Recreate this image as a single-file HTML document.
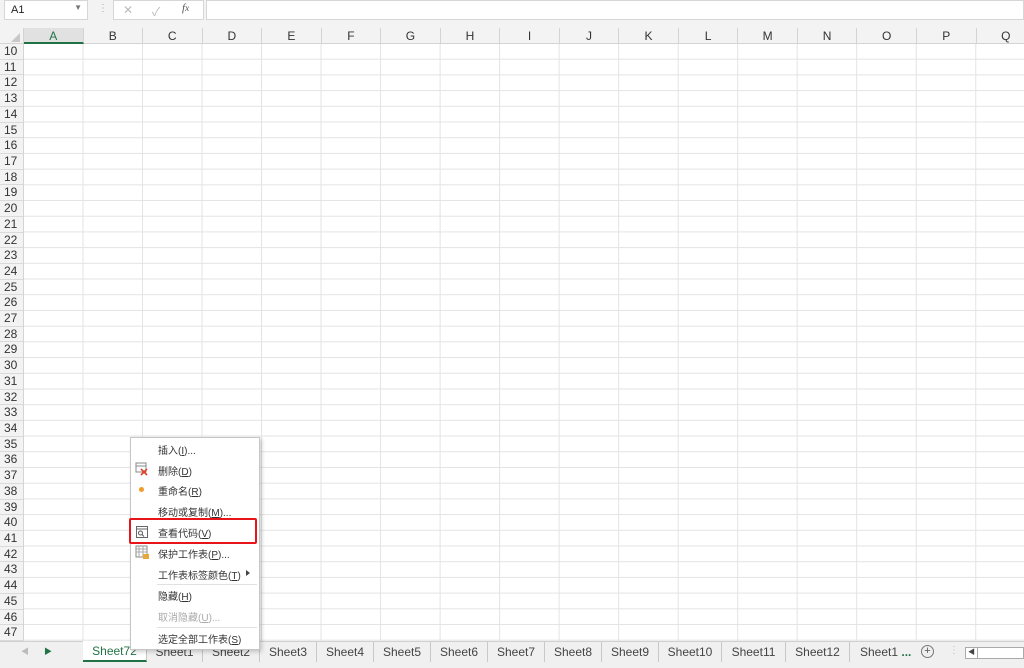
<!DOCTYPE html>
<html><head><meta charset="utf-8"><style>
*{margin:0;padding:0;box-sizing:border-box}
body{width:1024px;height:668px;overflow:hidden;background:#fff;font-family:"Liberation Sans","Noto Sans CJK SC",sans-serif;position:relative;font-size:12px;color:#222}
.abs{position:absolute}
#top{left:0;top:0;width:1024px;height:28px;background:#f3f3f3}
#namebox{left:4px;top:0;width:84px;height:20px;background:#fff;border:1px solid #d6d6d6;font-size:11px;padding:3px 6px}
#fx{left:113px;top:0;width:91px;height:20px;background:#fff;border:1px solid #d6d6d6;color:#bbb}
#fbar{left:206px;top:0;width:818px;height:20px;background:#fff;border:1px solid #d6d6d6}
#colhdr{left:0;top:28px;width:1024px;height:16px;background:#f3f3f3;border-bottom:1px solid #d4d4d4}
.ch{position:absolute;top:0;height:16px;border-right:1px solid #d4d4d4;text-align:center;font-size:12px;line-height:17px;color:#333}
#grid{left:24px;top:44px;width:1000px;height:597px;
background-image:linear-gradient(to right,#e3e3e3 1px,transparent 1px),linear-gradient(to bottom,#e3e3e3 1px,transparent 1px);
background-size:59.53px 15.71px;background-position:58.5px 14.7px}
#rowhdr{left:0;top:44px;width:24px;height:597px;background:#f3f3f3;border-right:1px solid #d4d4d4}
.rh{position:absolute;left:0;width:23px;height:15.71px;border-bottom:1px solid #dadada;font-size:12px;line-height:15px;padding-left:4px;color:#333}
#tabs{left:0;top:641px;width:1024px;height:21px;background:#f0f0f0;border-top:1px solid #d0d0d0}
#strip{left:0;top:662px;width:1024px;height:6px;background:#f0f0f0}
.tab{position:absolute;top:0;height:20px;font-size:12px;line-height:20px;text-align:center;color:#444;border-right:1px solid #c8c8c8}
#menu{left:130px;top:437px;width:130px;height:213px;background:#fff;border:1px solid #c6c6c6;box-shadow:2px 2px 4px rgba(0,0,0,.18)}
.mi{position:absolute;left:27px;font-size:10px;color:#333;white-space:nowrap}
.sep{position:absolute;left:26px;width:100px;height:1px;background:#e1e1e1}
</style></head><body>
<div id="top" class="abs"></div>
<div id="namebox" class="abs">A1<span style="position:absolute;right:5px;top:2px;font-size:8px;color:#777">▼</span></div>
<div class="abs" style="left:98px;top:3px;color:#aaa;font-size:10px">⋮</div>
<div id="fx" class="abs"><span class="abs" style="left:9px;top:2px;font-size:12px">✕</span><span class="abs" style="left:38px;top:2px;font-size:12px">✓</span><span class="abs" style="left:68px;top:1px;font-size:11px;color:#555;font-style:italic;font-family:'Liberation Serif',serif">f<small>x</small></span></div>
<div id="fbar" class="abs"></div>
<div id="colhdr" class="abs">
<div class="ch" style="left:0;width:24px"><span style="position:absolute;right:3px;bottom:2px;width:0;height:0;border-left:9px solid transparent;border-bottom:9px solid #c8c8c8"></span></div>
<div class="ch" style="left:24px;width:59.5px;background:#e1e1e1;border-bottom:2px solid #217346;color:#217346">A</div>
<div class="ch" style="left:83.5px;width:59.5px">B</div>
<div class="ch" style="left:143px;width:59.5px">C</div>
<div class="ch" style="left:202.6px;width:59.5px">D</div>
<div class="ch" style="left:262.1px;width:59.5px">E</div>
<div class="ch" style="left:321.7px;width:59.5px">F</div>
<div class="ch" style="left:381.2px;width:59.5px">G</div>
<div class="ch" style="left:440.7px;width:59.5px">H</div>
<div class="ch" style="left:500.3px;width:59.5px">I</div>
<div class="ch" style="left:559.8px;width:59.5px">J</div>
<div class="ch" style="left:619.3px;width:59.5px">K</div>
<div class="ch" style="left:678.8px;width:59.5px">L</div>
<div class="ch" style="left:738.4px;width:59.5px">M</div>
<div class="ch" style="left:797.9px;width:59.5px">N</div>
<div class="ch" style="left:857.4px;width:59.5px">O</div>
<div class="ch" style="left:917px;width:59.5px">P</div>
<div class="ch" style="left:976.5px;width:59.5px">Q</div>
</div>
<div id="grid" class="abs"></div>
<div id="rowhdr" class="abs">
<div class="rh" style="top:0px">10</div><div class="rh" style="top:15.71px">11</div><div class="rh" style="top:31.42px">12</div><div class="rh" style="top:47.13px">13</div><div class="rh" style="top:62.84px">14</div><div class="rh" style="top:78.55px">15</div><div class="rh" style="top:94.26px">16</div><div class="rh" style="top:109.97px">17</div><div class="rh" style="top:125.68px">18</div><div class="rh" style="top:141.39px">19</div><div class="rh" style="top:157.1px">20</div><div class="rh" style="top:172.81px">21</div><div class="rh" style="top:188.52px">22</div><div class="rh" style="top:204.23px">23</div><div class="rh" style="top:219.94px">24</div><div class="rh" style="top:235.65px">25</div><div class="rh" style="top:251.36px">26</div><div class="rh" style="top:267.07px">27</div><div class="rh" style="top:282.78px">28</div><div class="rh" style="top:298.49px">29</div><div class="rh" style="top:314.2px">30</div><div class="rh" style="top:329.91px">31</div><div class="rh" style="top:345.62px">32</div><div class="rh" style="top:361.33px">33</div><div class="rh" style="top:377.04px">34</div><div class="rh" style="top:392.75px">35</div><div class="rh" style="top:408.46px">36</div><div class="rh" style="top:424.17px">37</div><div class="rh" style="top:439.88px">38</div><div class="rh" style="top:455.59px">39</div><div class="rh" style="top:471.3px">40</div><div class="rh" style="top:487.01px">41</div><div class="rh" style="top:502.72px">42</div><div class="rh" style="top:518.43px">43</div><div class="rh" style="top:534.14px">44</div><div class="rh" style="top:549.85px">45</div><div class="rh" style="top:565.56px">46</div><div class="rh" style="top:581.27px">47</div>
</div>
<div id="tabs" class="abs">
<span class="abs" style="left:21px;top:4px;font-size:8px;color:#bbb">◀</span>
<span class="abs" style="left:44px;top:4px;font-size:8px;color:#217346">▶</span>
<div class="tab" style="left:83px;width:64px;background:#fff;color:#217346;border-bottom:2px solid #217346;top:-1px;height:21px">Sheet72</div>
<div class="tab" style="left:147px;width:56px">Sheet1</div>
<div class="tab" style="left:203px;width:57px">Sheet2</div>
<div class="tab" style="left:260px;width:57px">Sheet3</div>
<div class="tab" style="left:317px;width:57px">Sheet4</div>
<div class="tab" style="left:374px;width:57px">Sheet5</div>
<div class="tab" style="left:431px;width:57px">Sheet6</div>
<div class="tab" style="left:488px;width:57px">Sheet7</div>
<div class="tab" style="left:545px;width:57px">Sheet8</div>
<div class="tab" style="left:602px;width:57px">Sheet9</div>
<div class="tab" style="left:659px;width:63px">Sheet10</div>
<div class="tab" style="left:722px;width:64px">Sheet11</div>
<div class="tab" style="left:786px;width:64px">Sheet12</div>
<div class="tab" style="left:850px;width:65px;border:none;text-align:left;padding-left:10px">Sheet1 <b style="color:#217346">...</b></div>
<span class="abs" style="left:921px;top:3px;width:13px;height:13px;border:1px solid #777;border-radius:50%;font-size:11px;line-height:11px;text-align:center;color:#555">+</span>
<span class="abs" style="left:949px;top:3px;color:#bbb;font-size:10px">⋮</span>
<div class="abs" style="left:965px;top:5px;width:59px;height:12px;background:#fff;border:1px solid #aaa"><span style="position:absolute;left:0;top:0;width:12px;height:10px;border-right:1px solid #aaa;font-size:7px;line-height:10px;text-align:center;color:#444">◀</span></div>
</div>
<div id="strip" class="abs"></div>
<div id="menu" class="abs">
<div class="mi" style="top:4px">插入(<u>I</u>)...</div>
<svg class="abs" style="left:4px;top:24px" width="14" height="14"><rect x="1" y="1" width="10" height="9" fill="none" stroke="#888"/><line x1="1" y1="4" x2="11" y2="4" stroke="#888"/><path d="M6 7l6 6M12 7l-6 6" stroke="#e0402a" stroke-width="1.6"/></svg>
<div class="mi" style="top:25px">删除(<u>D</u>)</div>
<div class="abs" style="left:8px;top:49px;width:5px;height:5px;border-radius:50%;background:#f39a2b"></div>
<div class="mi" style="top:45px">重命名(<u>R</u>)</div>
<div class="mi" style="top:66px">移动或复制(<u>M</u>)...</div>
<svg class="abs" style="left:4px;top:87px" width="14" height="14"><rect x="1.5" y="1.5" width="11" height="11" fill="none" stroke="#666"/><line x1="1.5" y1="4" x2="12.5" y2="4" stroke="#666"/><circle cx="5.5" cy="8" r="2" fill="none" stroke="#555"/><line x1="7" y1="9.5" x2="9" y2="11.5" stroke="#555"/></svg>
<div class="mi" style="top:87px">查看代码(<u>V</u>)</div>
<svg class="abs" style="left:4px;top:107px" width="15" height="15"><rect x="1" y="1" width="11" height="11" fill="none" stroke="#888"/><path d="M1 4h11M1 7h11M4 1v11M8 1v11" stroke="#aaa"/><rect x="8" y="9" width="6" height="5" fill="#e9a93a"/></svg>
<div class="mi" style="top:108px">保护工作表(<u>P</u>)...</div>
<div class="mi" style="top:129px">工作表标签颜色(<u>T</u>)</div>
<div class="abs" style="left:115px;top:132px;width:0;height:0;border-top:3px solid transparent;border-bottom:3px solid transparent;border-left:4px solid #444"></div>
<div class="sep" style="top:146px"></div>
<div class="mi" style="top:150px">隐藏(<u>H</u>)</div>
<div class="mi" style="top:171px;color:#aaa">取消隐藏(<u>U</u>)...</div>
<div class="sep" style="top:189px"></div>
<div class="mi" style="top:193px">选定全部工作表(<u>S</u>)</div>
</div>
<div class="abs" style="left:129px;top:518px;width:128px;height:26px;border:2px solid #e8141b;border-radius:2px"></div>
</body></html>
